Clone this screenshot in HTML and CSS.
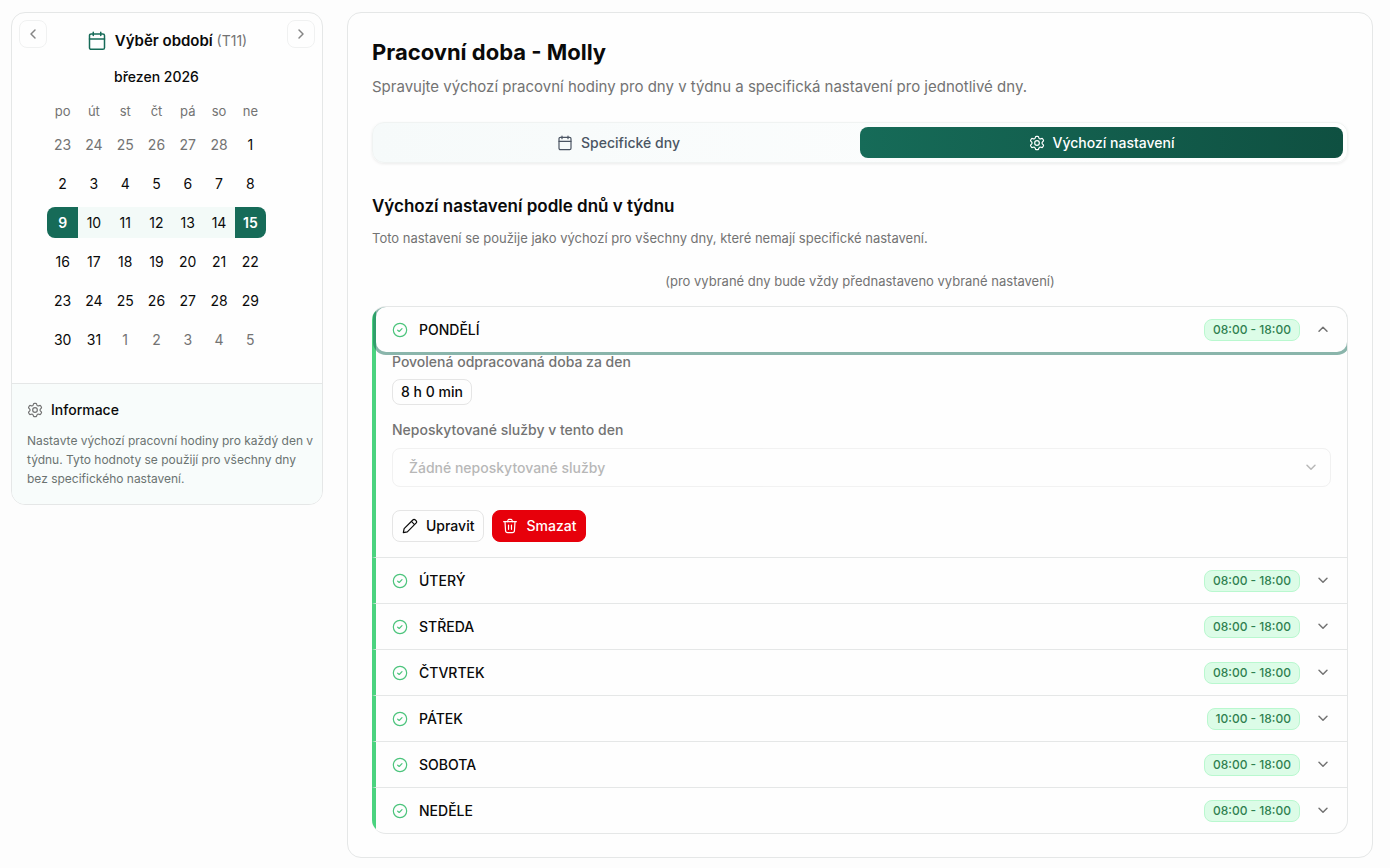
FILE: index.html
```html
<!DOCTYPE html>
<html lang="cs">
<head>
    <meta charset="UTF-8">
    <meta name="viewport" content="width=device-width, initial-scale=1.0">
    <title>Pracovní doba - Molly</title>
    <link rel="stylesheet" href="styles.css">
</head>
<body>
    <svg class="sprite" aria-hidden="true">
        <symbol id="i-calendar" viewBox="0 0 24 24"><path d="M16.500 1.500v4M7.500 1.500v4"/><path d="M5 3.500h14a2 2 0 0 1 2 2V20a2 2 0 0 1-2 2H5a2 2 0 0 1-2-2V5.500a2 2 0 0 1 2-2z"/><path d="M3 9.500h18"/></symbol>
        <symbol id="i-settings" viewBox="0 0 24 24"><path d="M21.3175 7.14139L20.8239 6.28479C20.4506 5.63696 20.264 5.31305 19.9464 5.18388C19.6288 5.05472 19.2696 5.15664 18.5513 5.36048L17.3311 5.70418C16.8725 5.80994 16.3913 5.74994 15.9726 5.53479L15.6357 5.34042C15.2766 5.11043 15.0004 4.77133 14.8475 4.37274L14.5136 3.37536C14.294 2.71534 14.1842 2.38533 13.9228 2.19657C13.6615 2.00781 13.3143 2.00781 12.6199 2.00781H11.5051C10.8108 2.00781 10.4636 2.00781 10.2022 2.19657C9.94085 2.38533 9.83106 2.71534 9.61149 3.37536L9.27753 4.37274C9.12465 4.77133 8.84845 5.11043 8.48937 5.34042L8.15249 5.53479C7.73374 5.74994 7.25259 5.80994 6.79398 5.70418L5.57375 5.36048C4.85541 5.15664 4.49625 5.05472 4.17867 5.18388C3.86109 5.31305 3.67445 5.63696 3.30115 6.28479L2.80757 7.14139C2.45766 7.74864 2.2827 8.05227 2.31666 8.37549C2.35061 8.69871 2.58483 8.95918 3.05326 9.48012L4.0843 10.6328C4.3363 10.9518 4.51521 11.5078 4.51521 12.0077C4.51521 12.5078 4.33636 13.0636 4.08433 13.3827L3.05326 14.5354C2.58483 15.0564 2.35062 15.3168 2.31666 15.6401C2.2827 15.9633 2.45766 16.2669 2.80757 16.8741L3.30114 17.7307C3.67443 18.3785 3.86109 18.7025 4.17867 18.8316C4.49625 18.9608 4.85542 18.8589 5.57377 18.655L6.79394 18.3113C7.25263 18.2055 7.73387 18.2656 8.15267 18.4808L8.4895 18.6752C8.84851 18.9052 9.12464 19.2442 9.2775 19.6428L9.61149 20.6403C9.83106 21.3003 9.94085 21.6303 10.2022 21.8191C10.4636 22.0078 10.8108 22.0078 11.5051 22.0078H12.6199C13.3143 22.0078 13.6615 22.0078 13.9228 21.8191C14.1842 21.6303 14.294 21.3003 14.5136 20.6403L14.8476 19.6428C15.0004 19.2442 15.2765 18.9052 15.6356 18.6752L15.9724 18.4808C16.3912 18.2656 16.8724 18.2055 17.3311 18.3113L18.5513 18.655C19.2696 18.8589 19.6288 18.9608 19.9464 18.8316C20.264 18.7025 20.4506 18.3785 20.8239 17.7307L21.3175 16.8741C21.6674 16.2669 21.8423 15.9633 21.8084 15.6401C21.7744 15.3168 21.5402 15.0564 21.0718 14.5354L20.0407 13.3827C19.7887 13.0636 19.6098 12.5078 19.6098 12.0077C19.6098 11.5078 19.7888 10.9518 20.0407 10.6328L21.0718 9.48012C21.5402 8.95918 21.7744 8.69871 21.8084 8.37549C21.8423 8.05227 21.6674 7.74864 21.3175 7.14139Z"/><circle cx="12" cy="12" r="3.500"/></symbol>
        <symbol id="i-check" viewBox="0 0 24 24"><circle cx="12" cy="12" r="10"/><path d="M8.500 12.300l2.300 1.900 4.200-4.200"/></symbol>
        <symbol id="i-down" viewBox="0 0 24 24"><path d="M6 8l6 6 6-6"/></symbol>
        <symbol id="i-up" viewBox="0 0 24 24"><path d="M6 14l6-6 6 6"/></symbol>
        <symbol id="i-left" viewBox="0 0 24 24"><path d="M15 6l-6 6 6 6"/></symbol>
        <symbol id="i-right" viewBox="0 0 24 24"><path d="M9 6l6 6-6 6"/></symbol>
        <symbol id="i-edit" viewBox="0 0 24 24"><path d="M2 22l1.200-6L16.200 3c1.300-1.300 2.500-1.300 3.800 0l1 1c1.300 1.300 1.300 2.500 0 3.800L8 20.800z"/><path d="M14.500 5.500l4 4"/></symbol>
        <symbol id="i-trash" viewBox="0 0 24 24"><path d="M19.500 5.500l-.8 13.200c-.1 1.900-1.200 3.300-3.200 3.300h-7c-2 0-3.100-1.400-3.200-3.300L4.500 5.500"/><path d="M2.500 5.500h19"/><path d="M8 5.500l1-2.300c.3-.8.800-1.200 1.600-1.200h2.800c.8 0 1.300.4 1.600 1.200l1 2.300"/><path d="M9.800 17v-6.500M14.200 17v-6.500"/></symbol>
    </svg>

    <div class="layout">
        <aside class="card sidebar">
            <div class="calendar">
                <div class="calendar-header">
                    <button class="nav-btn" type="button" aria-label="Předchozí měsíc"><svg class="icon arrow"><use href="#i-left"/></svg></button>
                    <h2 class="calendar-title"><svg class="icon icon-lg"><use href="#i-calendar"/></svg><span>Výběr období <small>(T11)</small></span></h2>
                    <button class="nav-btn" type="button" aria-label="Další měsíc"><svg class="icon arrow"><use href="#i-right"/></svg></button>
                </div>
                <table class="month">
                    <caption>březen 2026</caption>
                    <thead>
                        <tr><th>po</th><th>út</th><th>st</th><th>čt</th><th>pá</th><th>so</th><th>ne</th></tr>
                    </thead>
                    <tbody id="days"></tbody>
                </table>
            </div>
            <div class="info">
                <h3><svg class="icon"><use href="#i-settings"/></svg>Informace</h3>
                <p>Nastavte výchozí pracovní hodiny pro každý den v týdnu. Tyto hodnoty se použijí pro všechny dny bez specifického nastavení.</p>
            </div>
        </aside>

        <main class="card content">
            <h1>Pracovní doba - Molly</h1>
            <p class="lead">Spravujte výchozí pracovní hodiny pro dny v týdnu a specifická nastavení pro jednotlivé dny.</p>

            <div class="tabs" role="tablist">
                <button class="tab" type="button" role="tab" aria-selected="false"><svg class="icon"><use href="#i-calendar"/></svg>Specifické dny</button>
                <button class="tab active" type="button" role="tab" aria-selected="true"><svg class="icon"><use href="#i-settings"/></svg>Výchozí nastavení</button>
            </div>

            <h2 class="section-title">Výchozí nastavení podle dnů v týdnu</h2>
            <p class="section-text">Toto nastavení se použije jako výchozí pro všechny dny, které nemají specifické nastavení.</p>
            <p class="section-note">(pro vybrané dny bude vždy přednastaveno vybrané nastavení)</p>

            <div class="accordion">
                <div class="item">
                    <button class="trigger focused" type="button" aria-expanded="true">
                        <svg class="icon status"><use href="#i-check"/></svg>
                        <span class="day-name">PONDĚLÍ</span>
                        <span class="hours">08:00 - 18:00</span>
                        <svg class="icon chevron"><use href="#i-up"/></svg>
                    </button>
                    <div class="panel">
                        <div class="label">Povolená odpracovaná doba za den</div>
                        <span class="duration">8 h 0 min</span>
                        <label class="label" for="services">Neposkytované služby v tento den</label>
                        <div class="select-wrap">
                            <select id="services" disabled>
                                <option>Žádné neposkytované služby</option>
                            </select>
                            <svg class="icon arrow"><use href="#i-down"/></svg>
                        </div>
                        <div class="actions">
                            <button class="btn" type="button"><svg class="icon"><use href="#i-edit"/></svg>Upravit</button>
                            <button class="btn btn-danger" type="button"><svg class="icon"><use href="#i-trash"/></svg>Smazat</button>
                        </div>
                    </div>
                </div>
                <div class="item">
                    <button class="trigger" type="button" aria-expanded="false">
                        <svg class="icon status"><use href="#i-check"/></svg>
                        <span class="day-name">ÚTERÝ</span>
                        <span class="hours">08:00 - 18:00</span>
                        <svg class="icon chevron"><use href="#i-down"/></svg>
                    </button>
                </div>
                <div class="item">
                    <button class="trigger" type="button" aria-expanded="false">
                        <svg class="icon status"><use href="#i-check"/></svg>
                        <span class="day-name">STŘEDA</span>
                        <span class="hours">08:00 - 18:00</span>
                        <svg class="icon chevron"><use href="#i-down"/></svg>
                    </button>
                </div>
                <div class="item">
                    <button class="trigger" type="button" aria-expanded="false">
                        <svg class="icon status"><use href="#i-check"/></svg>
                        <span class="day-name">ČTVRTEK</span>
                        <span class="hours">08:00 - 18:00</span>
                        <svg class="icon chevron"><use href="#i-down"/></svg>
                    </button>
                </div>
                <div class="item">
                    <button class="trigger" type="button" aria-expanded="false">
                        <svg class="icon status"><use href="#i-check"/></svg>
                        <span class="day-name">PÁTEK</span>
                        <span class="hours">10:00 - 18:00</span>
                        <svg class="icon chevron"><use href="#i-down"/></svg>
                    </button>
                </div>
                <div class="item">
                    <button class="trigger" type="button" aria-expanded="false">
                        <svg class="icon status"><use href="#i-check"/></svg>
                        <span class="day-name">SOBOTA</span>
                        <span class="hours">08:00 - 18:00</span>
                        <svg class="icon chevron"><use href="#i-down"/></svg>
                    </button>
                </div>
                <div class="item">
                    <button class="trigger" type="button" aria-expanded="false">
                        <svg class="icon status"><use href="#i-check"/></svg>
                        <span class="day-name">NEDĚLE</span>
                        <span class="hours">08:00 - 18:00</span>
                        <svg class="icon chevron"><use href="#i-down"/></svg>
                    </button>
                </div>
            </div>
        </main>
    </div>

    <script>
        // the grid starts on Monday 23 February 2026
        const tbody = document.getElementById('days');
        const date = new Date(2026, 1, 23);

        for (let week = 0; week < 6; week++) {
            const row = document.createElement('tr');
            for (let i = 0; i < 7; i++) {
                const day = date.getDate();
                const inMonth = date.getMonth() === 2;
                const cell = document.createElement('td');
                const button = document.createElement('button');
                button.type = 'button';
                button.className = 'day';
                button.textContent = day;
                if (!inMonth) button.classList.add('outside');
                if (inMonth && day >= 9 && day <= 15) button.classList.add('in-range');
                if (inMonth && day === 9) button.classList.add('range-start');
                if (inMonth && day === 15) button.classList.add('range-end');
                cell.appendChild(button);
                row.appendChild(cell);
                date.setDate(day + 1);
            }
            tbody.appendChild(row);
        }
    </script>
</body>
</html>
```
FILE: styles.css
```css
* {
    box-sizing: border-box;
}

body {
    margin: 0;
    padding: 12px 17px 10px 11px;
    background: #fdfdfd;
    color: #0a0a0a;
    font-family: Inter, sans-serif;
    font-size: 14px;
    line-height: 20px;
}

h1, h2, h3, p {
    margin: 0;
}

button, select {
    font-family: inherit;
    font-size: 14px;
    line-height: 20px;
    font-weight: 500;
    color: inherit;
}

button {
    border: none;
    background: none;
    padding: 0;
    cursor: pointer;
}

.sprite {
    display: none;
}

.icon {
    width: 16px;
    height: 16px;
    flex: none;
    fill: none;
    stroke: currentColor;
    stroke-width: 1.8;
    stroke-linecap: round;
    stroke-linejoin: round;
}

.icon-lg {
    width: 20px;
    height: 20px;
    color: #166b58;
}

.arrow,
.chevron {
    stroke-width: 2.2;
}

.layout {
    display: grid;
    grid-template-columns: 312px 1fr;
    gap: 24px;
    align-items: start;
}

.card {
    background: #fefefe;
    border: 1px solid #e5e7e7;
    border-radius: 14px;
    overflow: hidden;
}

/* calendar */

.calendar {
    padding: 7px 7px 28px;
}

.calendar-header {
    display: flex;
    justify-content: space-between;
    align-items: flex-start;
}

.nav-btn {
    width: 28px;
    height: 28px;
    display: flex;
    align-items: center;
    justify-content: center;
    border: 1px solid #f0f1f1;
    border-radius: 8px;
    color: #858585;
}

.calendar-title {
    display: flex;
    align-items: center;
    gap: 8px;
    padding-top: 8px;
    font-size: 15px;
    line-height: 25px;
    font-weight: 600;
}

.calendar-title small {
    font-size: 14px;
    font-weight: 400;
    color: #737373;
}

.month {
    width: 219px;
    margin: 14px 0 0 28px;
    table-layout: fixed;
    border-collapse: collapse;
}

.month caption {
    padding-bottom: 15px;
    font-weight: 500;
}

.month th {
    padding: 0;
    font-size: 13px;
    line-height: 19px;
    font-weight: 400;
    color: #737373;
}

.month td {
    padding: 8px 0 0;
}

.day {
    display: block;
    width: 100%;
    height: 31px;
    font-weight: 400;
}

.day.outside {
    color: #737373;
}

.day.in-range {
    background: #f3faf8;
}

.day.range-start,
.day.range-end {
    background: #166b58;
    color: #fff;
    font-weight: 600;
}

.day.range-start {
    border-radius: 8px 0 0 8px;
}

.day.range-end {
    border-radius: 0 8px 8px 0;
}

.info {
    padding: 16px 6px 16px 15px;
    border-top: 1px solid #e5e7e7;
    background: #f8fcfb;
}

.info h3 {
    display: flex;
    align-items: center;
    gap: 8px;
    font-size: 14px;
    font-weight: 500;
}

.info h3 .icon {
    color: #737373;
}

.info p {
    margin-top: 11px;
    font-size: 12px;
    line-height: 19px;
    color: #6b7371;
}

/* main card */

.content {
    padding: 24px 24px 23px;
}

h1 {
    font-size: 22px;
    line-height: 31px;
    font-weight: 700;
}

.lead {
    margin-top: 7px;
    font-size: 15px;
    line-height: 24px;
    color: #737373;
}

.tabs {
    display: grid;
    grid-template-columns: 1fr 1fr;
    margin-top: 23px;
    padding: 4px;
    border: 1px solid #f0f3f2;
    border-radius: 12px;
    background: linear-gradient(90deg, #f6fafa, #fff);
    box-shadow: 0 1px 3px rgba(0, 0, 0, 0.08);
}

.tab {
    display: flex;
    align-items: center;
    justify-content: center;
    gap: 8px;
    height: 31px;
    border-radius: 8px;
    color: #4b5563;
}

.tab.active {
    background: linear-gradient(90deg, #166b58, #0f5041);
    color: #fff;
}

.section-title {
    margin-top: 29px;
    font-size: 17px;
    line-height: 28px;
    font-weight: 600;
}

.section-text {
    margin-top: 8px;
    font-size: 13px;
    color: #737373;
}

.section-note {
    margin-top: 23px;
    font-size: 13px;
    text-align: center;
    color: #737373;
}

.accordion {
    margin-top: 15px;
    border: 1px solid #e5e7e7;
    border-left: none;
    border-radius: 14px;
    overflow: hidden;
}

.item {
    border-left: 4px solid #4bd37f;
    border-bottom: 1px solid #e5e7e7;
}

.item:last-child {
    border-bottom: none;
}

.trigger {
    display: flex;
    align-items: center;
    width: 100%;
    height: 45px;
    padding: 0 16px;
    border-radius: 10px;
}

.trigger.focused {
    box-shadow: 0 0 0 3px rgba(22, 107, 88, 0.5);
}

.status {
    color: #4cc47c;
}

.day-name {
    flex: 1;
    margin-left: 11px;
    text-align: left;
}

.hours {
    padding: 1px 8px;
    border: 1px solid #b9f8cf;
    border-radius: 8px;
    background: #dcfce7;
    font-size: 12px;
    line-height: 18px;
    color: #2f8050;
}

.chevron {
    margin-left: 15px;
    color: #737373;
}

.panel {
    padding: 0 16px 15px;
}

.label {
    display: block;
    font-weight: 500;
    color: #737373;
}

.duration {
    display: inline-block;
    margin: 7px 0 15px;
    padding: 2px 8px;
    border: 1px solid #e5e5e5;
    border-radius: 8px;
    font-weight: 500;
}

.select-wrap {
    position: relative;
    margin-top: 8px;
    opacity: 0.5;
}

.select-wrap select {
    display: block;
    width: 100%;
    height: 39px;
    padding: 0 16px;
    border: 1px solid #e5e5e5;
    border-radius: 8px;
    background: none;
    color: #737373;
    opacity: 1;
    appearance: none;
}

.select-wrap .icon {
    position: absolute;
    top: 12px;
    right: 12px;
    color: #737373;
}

.actions {
    display: flex;
    gap: 8px;
    margin-top: 23px;
}

.btn {
    display: flex;
    align-items: center;
    gap: 8px;
    height: 32px;
    padding: 0 9px;
    border: 1px solid #e5e5e5;
    border-radius: 8px;
}

.btn-danger {
    border-color: #e7000b;
    background: #e7000b;
    color: #fff;
}
```
